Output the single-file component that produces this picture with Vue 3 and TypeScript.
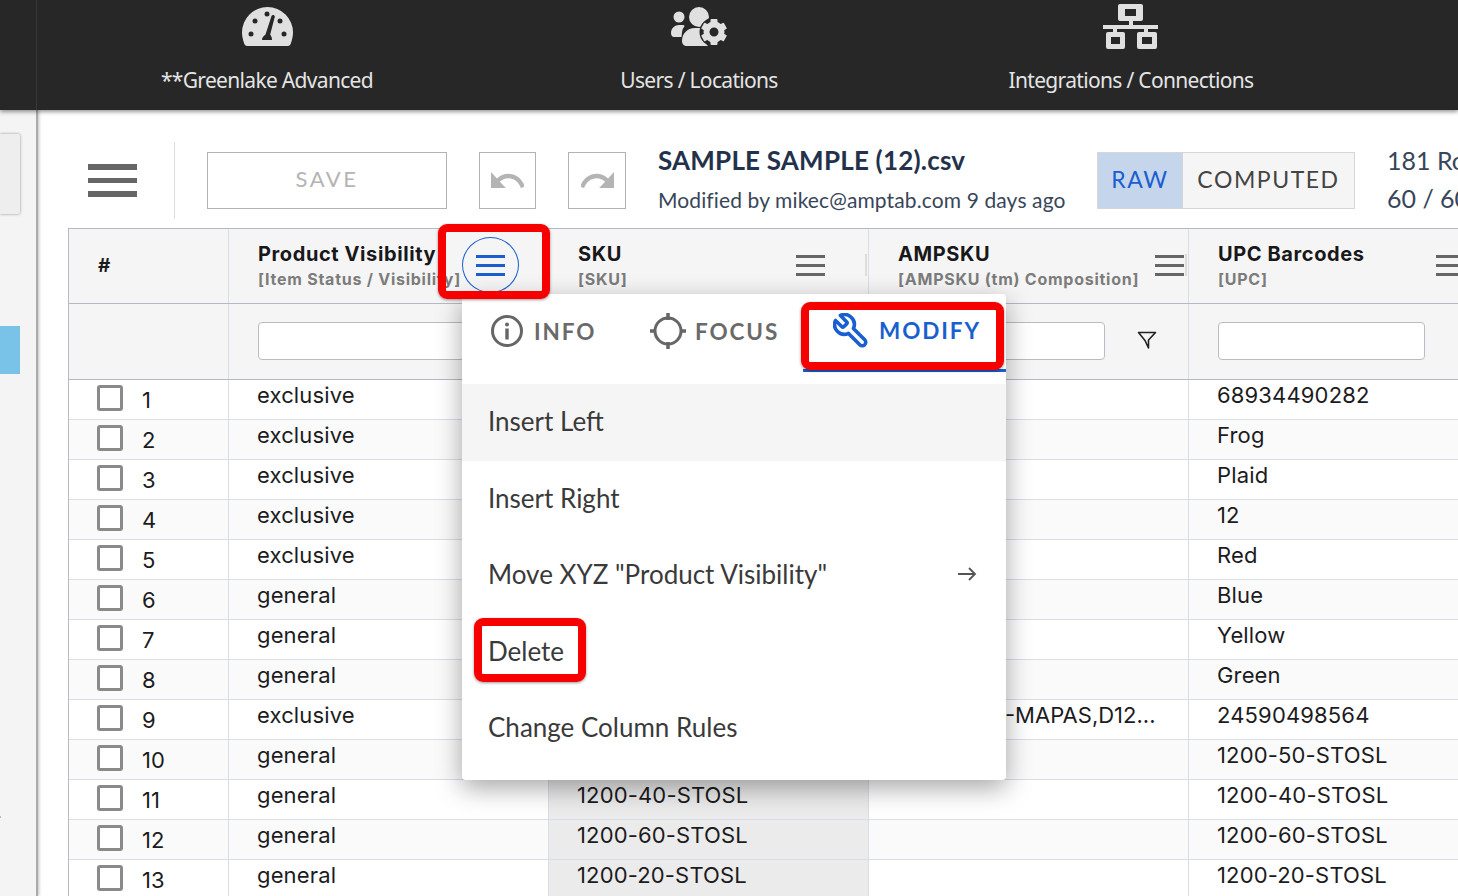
<script setup lang="ts">
interface Row { n: number; vis: string; sku: string; amp: string; upc: string }
const vis = ['exclusive','exclusive','exclusive','exclusive','exclusive','general','general','general','exclusive','general','general','general','general']
const upc = ['68934490282','Frog','Plaid','12','Red','Blue','Yellow','Green','24590498564','1200-50-STOSL','1200-40-STOSL','1200-60-STOSL','1200-20-STOSL']
const rows: Row[] = vis.map((v, i) => ({ n: i + 1, vis: v, sku: i >= 10 ? upc[i] : '', amp: i === 8 ? '-MAPAS,D12...' : '', upc: upc[i] }))
const teeth = [0, 60, 120, 180, 240, 300]
const columns = [
  { title: 'SKU', sub: '[SKU]', cls: '' },
  { title: 'AMPSKU', sub: '[AMPSKU (tm) Composition]', cls: 'wide' },
  { title: 'UPC Barcodes', sub: '[UPC]', cls: '' },
]
</script>

<template>
  <div class="app">
    <nav class="nav">
      <a class="nav-item">
        <svg class="ic-gauge" width="51" height="40" viewBox="0 0 51 40">
          <path fill="#e0e0e0" d="M5.500 40C3.500 40 2.500 39 2 37C.7 33 0 30 0 26.500A25.500 25.500 0 0 1 51 26.500C51 30 50.300 33 49 37C48.500 39 47.500 40 45.500 40Z" />
          <g fill="#272727">
            <circle cx="13" cy="15" r="2.500" /><circle cx="25" cy="8" r="2.500" /><circle cx="38" cy="15" r="2.500" />
            <circle cx="9" cy="28" r="2.500" /><circle cx="42" cy="28" r="2.500" />
            <path d="M20 34C20 31 22 30 23.500 28.500L29.500 10C30 8.500 33 9 32.800 10.800L28.200 28.500C29 30 30 31 30 34Z" />
          </g>
        </svg>
        <span>**Greenlake Advanced</span>
      </a>
      <a class="nav-item">
        <svg class="ic-users" width="56" height="40" viewBox="0 0 56 40">
          <g fill="#e0e0e0">
            <circle cx="8" cy="10" r="5.500" />
            <path d="M0 26C0 21 4 18 8 18H12C13.500 18 14 19 13 20C11 22 11 26 10.500 30H3C1 30 0 28 0 26Z" />
            <circle cx="28" cy="10" r="10" />
            <path d="M11 34C11 27 16 21 24 21H32C37 21 38 23 36 27C33 32 34 36 37 39H16C13 39 11 37 11 34Z" />
          </g>
          <circle cx="43" cy="25" r="14.500" fill="#272727" />
          <g fill="#e0e0e0">
            <rect v-for="t in teeth" :key="t" x="39.500" y="12" width="7" height="6" rx="1" :transform="`rotate(${t} 43 25)`" />
          </g>
          <circle cx="43" cy="25" r="7.500" fill="none" stroke="#e0e0e0" stroke-width="6" />
        </svg>
        <span>Users / Locations</span>
      </a>
      <a class="nav-item">
        <svg class="ic-map" width="55" height="45" viewBox="0 0 55 45">
          <path fill="#e0e0e0" fill-rule="evenodd" d="M17 0H38A2 2 0 0 1 40 2V15A2 2 0 0 1 38 17H30V21H55V25H45V28H52A2 2 0 0 1 54 30V43A2 2 0 0 1 52 45H36A2 2 0 0 1 34 43V30A2 2 0 0 1 36 28H41V25H14V28H20A2 2 0 0 1 22 30V43A2 2 0 0 1 20 45H5A2 2 0 0 1 3 43V30A2 2 0 0 1 5 28H10V25H0V21H26V17H17A2 2 0 0 1 15 15V2A2 2 0 0 1 17 0ZM22 5V12H33V5ZM8 33V40H17V33ZM39 33V40H49V33Z" />
        </svg>
        <span>Integrations / Connections</span>
      </a>
    </nav>

    <div class="body">
      <aside class="side">
        <div class="side-panel"></div>
        <div class="side-mark"></div>
        <div class="side-dot"></div>
      </aside>

      <main class="main">
        <header class="toolbar">
          <div class="burger-big"><i></i><i></i><i></i></div>
          <div class="divider"></div>
          <button class="btn save">SAVE</button>
          <button class="btn square undo">
            <svg width="33" height="17" viewBox="2 7 20 9.500" preserveAspectRatio="none"><path fill="#b4b4b4" d="M12.500 8c-2.650 0-5.050.99-6.900 2.600L2 7v9h9l-3.620-3.620c1.390-1.160 3.160-1.880 5.120-1.880 3.540 0 6.550 2.310 7.600 5.500l2.370-.78C21.080 11.030 17.150 8 12.500 8z" /></svg>
          </button>
          <button class="btn square redo">
            <svg width="33" height="17" viewBox="2 7 20 9.500" preserveAspectRatio="none"><g transform="matrix(-1 0 0 1 24 0)"><path fill="#b4b4b4" d="M12.500 8c-2.650 0-5.050.99-6.900 2.600L2 7v9h9l-3.620-3.620c1.390-1.160 3.160-1.880 5.120-1.880 3.540 0 6.550 2.310 7.600 5.500l2.370-.78C21.080 11.030 17.150 8 12.500 8z" /></g></svg>
          </button>
          <div class="file">
            <div class="file-name">SAMPLE SAMPLE (12).csv</div>
            <div class="file-meta">Modified by mikec@amptab.com 9 days ago</div>
          </div>
          <div class="toggle">
            <span class="tg on">RAW</span>
            <span class="tg off">COMPUTED</span>
          </div>
          <div class="counts">
            <div>181 Rows</div>
            <div>60 / 60 Columns</div>
          </div>
        </header>

        <section class="table">
          <div class="row head">
            <div class="cell hash">#</div>
            <div class="cell hcell">
              <div class="htitle">Product Visibility</div>
              <div class="hsub">[Item Status / Visibility]</div>
              <div class="circle"><div class="burger blue"><i></i><i></i><i></i></div></div>
            </div>
            <div v-for="c in columns" :key="c.title" class="cell hcell">
              <div class="htitle">{{ c.title }}</div>
              <div class="hsub">{{ c.sub }}</div>
              <div class="burger pos" :class="c.cls"><i></i><i></i><i></i></div>
              <span class="resizer"></span>
            </div>
          </div>
          <div class="row filters">
            <div class="cell"></div>
            <div class="cell fcell"><input class="finput" type="text" /></div>
            <div class="cell fcell"><input class="finput" type="text" /></div>
            <div class="cell fcell">
              <input class="finput" type="text" />
              <svg class="funnel" width="20" height="20" viewBox="0 0 20 20"><path fill="none" stroke="#222" stroke-width="1.600" stroke-linejoin="round" d="M1.500 2.500H18.500L11.500 10V18L8 10.500Z" /></svg>
            </div>
            <div class="cell fcell"><input class="finput" type="text" /></div>
          </div>
          <div v-for="r in rows" :key="r.n" class="row data" :class="{ even: r.n % 2 === 0 }">
            <div class="cell numcell"><span class="check"></span><span class="num">{{ r.n }}</span></div>
            <div class="cell">{{ r.vis }}</div>
            <div class="cell shade">{{ r.sku }}</div>
            <div class="cell amp">{{ r.amp }}</div>
            <div class="cell">{{ r.upc }}</div>
          </div>
        </section>
      </main>
    </div>

    <div class="menu">
      <div class="tabs">
        <div class="tab t-info">
          <svg width="34" height="34" viewBox="0 0 34 34"><circle cx="17" cy="17" r="14.500" fill="none" stroke="#666" stroke-width="3" /><circle cx="17" cy="10.500" r="2" fill="#666" /><rect x="15.300" y="14.500" width="3.400" height="11" fill="#666" /></svg>
          <span>INFO</span>
        </div>
        <div class="tab t-focus">
          <svg width="36" height="38" viewBox="0 0 36 38"><circle cx="18" cy="19" r="13" fill="none" stroke="#666" stroke-width="3" /><path d="M18 1V8M18 30V37M0 19H6M30 19H36" stroke="#666" stroke-width="3.500" /></svg>
          <span>FOCUS</span>
        </div>
        <div class="tab t-modify">
          <svg width="36" height="36" viewBox="1 1 22 22"><g transform="matrix(-1 0 0 1 24 0)"><path fill="none" stroke="#1a5fcf" stroke-width="2.200" stroke-linejoin="round" d="M14.700 6.300a1 1 0 0 0 0 1.400l1.600 1.600a1 1 0 0 0 1.400 0l3.770-3.770a6 6 0 0 1-7.940 7.940l-6.910 6.910a2.120 2.120 0 0 1-3-3l6.910-6.910a6 6 0 0 1 7.940-7.940l-3.760 3.760z" /></g></svg>
          <span>MODIFY</span>
        </div>
      </div>
      <div class="mi active">Insert Left</div>
      <div class="mi">Insert Right</div>
      <div class="mi between">
        <span>Move XYZ "Product Visibility"</span>
        <svg width="20" height="16" viewBox="0 0 20 16"><path d="M1 8H18M12 2L18 8L12 14" fill="none" stroke="#555" stroke-width="1.800" /></svg>
      </div>
      <div class="mi">Delete</div>
      <div class="mi">Change Column Rules</div>
    </div>

    <div class="mark m1"></div>
    <div class="mark m2"></div>
    <div class="mark m3"></div>
  </div>
</template>

<style>
html, body { margin: 0; background: #fff; overflow: hidden; }
</style>

<style scoped>
.app { position: relative; width: 1458px; height: 896px; overflow: hidden; display: flex; flex-direction: column; background: #fff; }

.nav { position: relative; z-index: 3; height: 110px; flex: none; display: grid; grid-template-columns: repeat(3, 432px); padding-left: 51px; background: #272727; box-shadow: 0 2px 4px rgba(0,0,0,.4); }
.nav::before { content: ""; position: absolute; left: 36px; top: 0; bottom: 0; width: 1px; background: #383838; }
.nav-item { position: relative; display: block; text-align: center; color: #e4e4e4; font: 400 21px/28px "Noto Sans", sans-serif; letter-spacing: -0.68px; }
.nav-item svg { position: absolute; left: 50%; display: block; }
.nav-item span { position: absolute; left: 0; right: 0; top: 66px; white-space: nowrap; }
.ic-gauge { top: 6px; margin-left: -25px; }
.ic-users { top: 7px; margin-left: -28px; }
.ic-map { top: 4px; margin-left: -28px; }

.body { flex: 1; display: flex; min-height: 0; }
.side { width: 36px; flex: none; background: #f4f4f4; border-right: 2px solid #aaa; box-shadow: 1px 0 3px rgba(0,0,0,.25); display: flex; flex-direction: column; }
.side-panel { margin-top: 24px; width: 20px; height: 80px; background: #eee; border-radius: 0 2px 2px 0; box-shadow: 0 0 3px rgba(0,0,0,.4); }
.side-mark { margin-top: 112px; width: 20px; height: 48px; background: #7ac3e8; }
.side-dot { margin-top: 442px; width: 1px; height: 2px; background: #bbb; }
.main { flex: 1; min-width: 0; display: flex; flex-direction: column; }

.toolbar { height: 118px; flex: none; display: flex; align-items: flex-start; padding-left: 50px; font-family: "Lato", sans-serif; color: #2c3a4b; }
.toolbar > * { flex: none; }
.burger-big { width: 49px; margin-top: 54px; display: flex; flex-direction: column; gap: 8px; }
.burger-big i { display: block; height: 5.500px; background: #666; }
.divider { width: 1px; height: 77px; margin: 32px 32px 0 37px; background: #ddd; }
.btn { box-sizing: border-box; height: 57px; margin-top: 42px; background: #fff; border: 1px solid #b2b2b2; padding: 0; display: flex; align-items: center; justify-content: center; font-family: "Lato", sans-serif; }
.save { width: 240px; padding-bottom: 4px; font-size: 22px; letter-spacing: 2.500px; color: #b4b4b4; }
.square { width: 57px; }
.undo { margin-left: 32px; }
.redo { margin-left: 32px; width: 58px; }
.file { margin: 35px 0 0 32px; width: 439px; }
.file-name { font-size: 26px; line-height: 30px; font-weight: 700; letter-spacing: .2px; color: #23324a; }
.file-meta { margin-top: 11px; font-size: 21px; line-height: 28px; letter-spacing: .12px; color: #38465a; }
.toggle { width: 258px; height: 57px; margin-top: 42px; display: flex; box-sizing: border-box; border: 1px solid #d6d6d6; font-size: 23px; letter-spacing: 1.550px; }
.tg { display: flex; align-items: center; justify-content: center; padding-bottom: 4px; box-sizing: border-box; }
.tg.on { width: 85px; background: #c5d6ec; color: #1a5fcf; border-right: 1px solid #d6d6d6; }
.tg.off { flex: 1; background: #f5f5f5; color: #444; }
.counts { margin: 31px 0 0 32px; font-size: 25px; line-height: 38px; white-space: nowrap; color: #38465a; }

.table { margin-left: 30px; width: 1460px; font: 400 22px/30px "Inter", sans-serif; letter-spacing: .15px; color: #1c1c1e; border-left: 1px solid #b4b9c4; }
.row { display: grid; grid-template-columns: 160px 320px 320px 320px 320px; }
.cell { position: relative; box-sizing: border-box; padding-left: 28px; border-right: 1px solid #d8dde9; white-space: nowrap; overflow: hidden; }
.head { height: 76px; background: #f5f5f5; border-top: 1px solid #b4b9c4; border-bottom: 1px solid #b4b9c4; box-sizing: border-box; }
.hash { padding-left: 29px; font-weight: 700; font-size: 19px; line-height: 74px; }
.hcell { padding: 10px 0 0 29px; overflow: visible; }
.htitle { font-weight: 700; font-size: 20px; line-height: 30px; letter-spacing: .6px; color: #18181a; }
.hsub { margin-top: -1px; font-weight: 700; font-size: 16px; line-height: 22px; letter-spacing: .75px; color: #7c7c7c; }
.circle { position: absolute; left: 233px; top: 8px; width: 57px; height: 56px; box-sizing: border-box; border: 1px solid #1a5fcf; border-radius: 50%; display: flex; align-items: center; justify-content: center; }
.burger { width: 29px; display: flex; flex-direction: column; gap: 6px; }
.burger i { display: block; height: 3px; background: #666; }
.burger.blue i { background: #1a5fcf; }
.burger.pos { position: absolute; left: 247px; top: 26px; }
.burger.pos.wide { left: 286px; }
.resizer { position: absolute; right: 1px; top: 25px; width: 2px; height: 22px; background: #ddd; }
.filters { height: 76px; background: #f5f5f5; border-bottom: 1px solid #b4b9c4; box-sizing: border-box; }
.fcell { padding: 18px 0 0 29px; }
.finput { box-sizing: border-box; display: block; width: 207px; height: 38px; background: #fff; border: 1px solid #b9bcc4; border-radius: 4px; padding: 0; margin: 0; }
.funnel { position: absolute; left: 268px; top: 26px; }
.data { height: 40px; box-sizing: border-box; border-bottom: 1px solid #d8dde9; }
.data.even { background: #fafafa; }
.shade { background: #ebebeb; }
.numcell { padding-left: 28px; display: flex; align-items: flex-start; }
.check { box-sizing: border-box; width: 26px; height: 26px; margin-top: 5px; border: 3px solid #8a8a8a; border-radius: 3px; background: #fff; flex: none; }
.num { margin-left: 19px; margin-top: 5px; }
.amp { padding-left: 136px; letter-spacing: 0; }

.menu { position: absolute; z-index: 5; left: 462px; top: 294px; width: 544px; height: 486px; box-sizing: border-box; background: #fff; border-radius: 4px; box-shadow: 0 8px 26px rgba(0,0,0,.35); font-family: "Lato", sans-serif; color: #333; }
.tabs { display: flex; height: 90px; position: relative; }
.tab { position: absolute; display: flex; align-items: center; top: 18px; height: 38px; font-size: 22.500px; font-weight: 700; letter-spacing: 1.900px; color: #6a6a6a; white-space: nowrap; }
.t-info { left: 28px; gap: 10px; }
.t-focus { left: 188px; gap: 9px; }
.t-modify { left: 341px; width: 203px; top: 0; height: 78px; box-sizing: border-box; padding: 0 0 2px 30px; gap: 10px; color: #1a5fcf; border-bottom: 3px solid #1a5fcf; }
.mi { height: 76.500px; box-sizing: border-box; padding: 0 29px 2px 26px; display: flex; align-items: center; font-size: 26px; color: #3a3a3a; }
.mi.active { background: #f5f5f5; }
.between { justify-content: space-between; }

.mark { position: absolute; z-index: 6; box-sizing: border-box; border: 8px solid #f60000; border-radius: 9px; box-shadow: 0 1px 3px rgba(0,0,0,.4); }
.m1 { left: 438px; top: 224px; width: 112px; height: 75px; }
.m2 { left: 801px; top: 302px; width: 203px; height: 68px; }
.m3 { left: 474px; top: 618px; width: 112px; height: 64px; }
</style>
